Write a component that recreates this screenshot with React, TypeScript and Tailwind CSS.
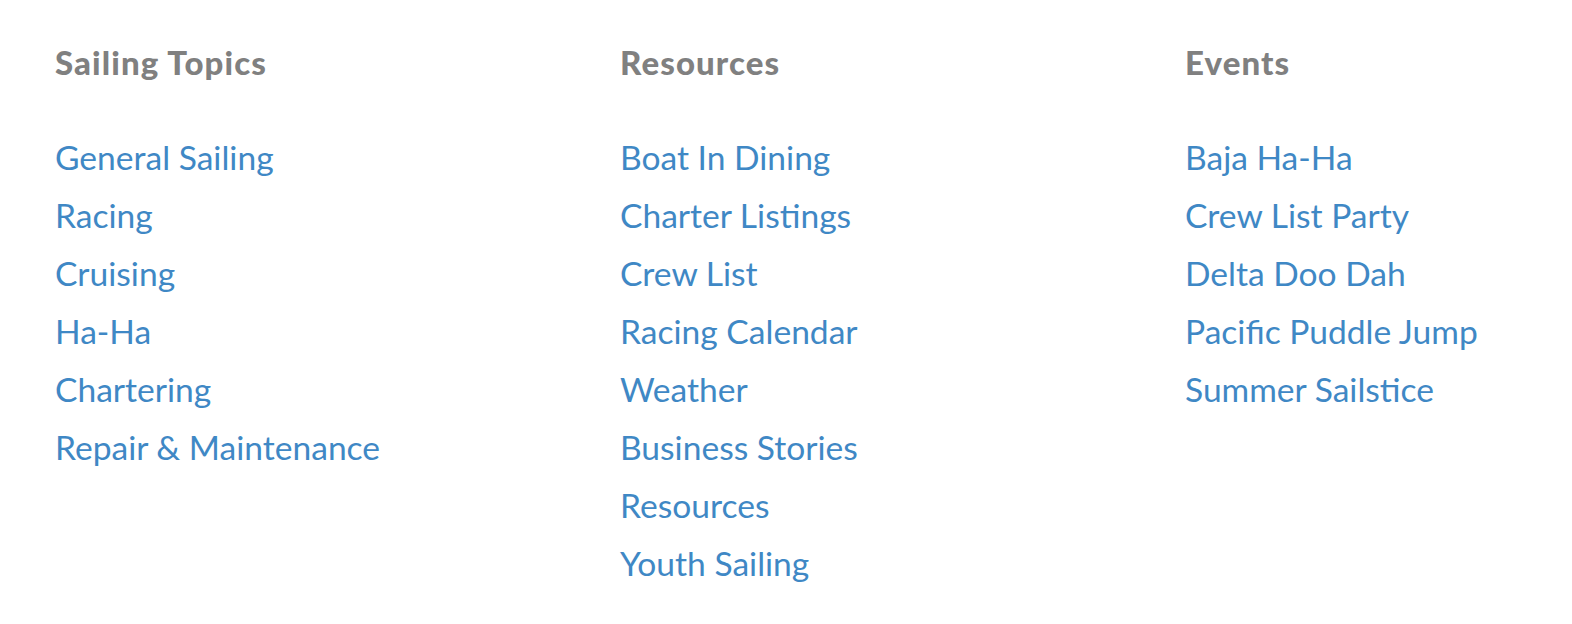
import React from 'react';

const columns = [
  {
    title: 'Sailing Topics',
    links: ['General Sailing', 'Racing', 'Cruising', 'Ha-Ha', 'Chartering', 'Repair & Maintenance'],
  },
  {
    title: 'Resources',
    links: [
      'Boat In Dining',
      'Charter Listings',
      'Crew List',
      'Racing Calendar',
      'Weather',
      'Business Stories',
      'Resources',
      'Youth Sailing',
    ],
  },
  {
    title: 'Events',
    links: ['Baja Ha-Ha', 'Crew List Party', 'Delta Doo Dah', 'Pacific Puddle Jump', 'Summer Sailstice'],
  },
];

const App: React.FC = () => {
  return (
    <div className="w-[1572px] h-[624px] bg-white pl-[55px] pt-[33px] font-['Lato',sans-serif]">
      <div className="grid grid-cols-[565px_565px_1fr]">
        {columns.map((col) => (
          <div key={col.title} className="flex flex-col">
            <h3 className="text-[33px] leading-[58px] font-black tracking-[1.1px] text-[#808080] mb-[37px]">
              {col.title}
            </h3>
            <ul className="flex flex-col">
              {col.links.map((link) => (
                <li key={link} className="text-[33.6px] leading-[58px]">
                  <a href="#" className="text-[#3f88c5]">
                    {link}
                  </a>
                </li>
              ))}
            </ul>
          </div>
        ))}
      </div>
    </div>
  );
};

export default App;
